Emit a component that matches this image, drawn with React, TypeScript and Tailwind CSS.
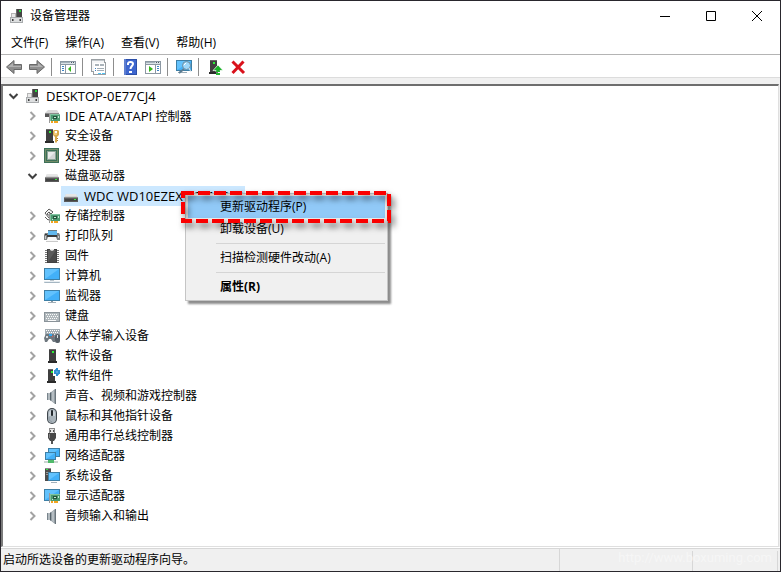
import React, { useState } from 'react';

type IconProps = { children: React.ReactNode };

const Icon = ({ children }: IconProps) => (
  <svg width="16" height="16" viewBox="0 0 16 16" className="block shrink-0" aria-hidden="true">
    {children}
  </svg>
);

// Parts shared by several icons
const Screen = ({ x = 0, y = 2, w = 16, h = 11 }: { x?: number; y?: number; w?: number; h?: number }) => (
  <>
    <rect x={x} y={y} width={w} height={h} fill="#3d7fa6" />
    <rect x={x + 1} y={y + 1} width={w - 2} height={h - 2} fill="#42b0f8" />
    <path d={`M${x + 1} ${y + h - 1}V${y + 1}H${x + w - 1}Z`} fill="#62c2fd" />
  </>
);

const Card = () => (
  <>
    <path d="M5 5h1v10H5z" fill="#9a9a9a" />
    <rect x="6" y="6" width="10" height="7" fill="#4c9a72" />
    <path d="M6 6h10v1H6zM6 7h1v6H6z" fill="#80c39f" />
    <rect x="9" y="8" width="4" height="3" fill="#24553c" />
    <path d="M10 9h2v1h-2zM14 8h1v2h-1zM8 11h1v1H8z" fill="#c3ead3" />
    <path d="M7 13h2v2H7zM10 13h4v2h-4z" fill="#f2a51f" />
  </>
);

const Tower = ({ x = 5 }: { x?: number }) => (
  <>
    <path d={`M${x} 1h7v13h-7z`} fill="#3f3f3f" />
    <path d={`M${x} 1h7v1h-7z`} fill="#686868" />
    <rect x={x + 3} y="3" width="2" height="2" fill="#2bef37" />
    <rect x={x - 1} y="13" width="9" height="2" fill="#2a2a2a" />
  </>
);

const ComputerIcon = () => (
  <Icon>
    <rect x="7" y="1" width="6" height="9" fill="#454545" />
    <rect x="7" y="1" width="1" height="9" fill="#6b6b6b" />
    <rect x="10" y="2" width="2" height="2" fill="#25d83a" />
    <path d="M3 6h3v3H3z" fill="#e9e9e9" />
    <path d="M2 5h5v4H6V6H3v3H2z" fill="#b5b5b5" />
    <path d="M1 9h13v6H1z" fill="#a8abad" />
    <path d="M2 10h11v4H2z" fill="#dcdedf" />
    <path d="M3 11h1v2H3zM11 11h1v2h-1z" fill="#3d3d3d" />
    <path d="M4 11h1v2H4zM10 11h1v2h-1z" fill="#8b8b8b" />
  </Icon>
);

const DriveIcon = () => (
  <Icon>
    <path d="M3 6h10l2 4H1z" fill="#d2d2d2" />
    <path d="M3 6h10l1 2H2z" fill="#e6e6e6" />
    <path d="M1 9h14v5H1z" fill="#5b5b5b" />
    <path d="M1 9h14v1H1z" fill="#8d8d8d" />
    <path d="M2 11h12v2H2z" fill="#434343" />
    <rect x="11" y="11" width="2" height="1" fill="#37ed3c" />
  </Icon>
);

const IdeIcon = () => (
  <Icon>
    <path d="M4 2h9l2 3H1z" fill="#d8d8d8" />
    <rect x="1" y="5" width="14" height="4" fill="#565656" />
    <path d="M1 5h14v1H1z" fill="#8d8d8d" />
    <Card />
  </Icon>
);

const SecurityIcon = () => (
  <Icon>
    <Tower x={2} />
    <path d="M10 2h4l1 1v4l-2 2v5l-1 1-1-1V9L9 7V3z" fill="#d9aa4b" />
    <path d="M10 3h3v4h-3z" fill="#f1cc7b" />
    <path d="M11 3h2v2h-2z" fill="#fff" />
    <path d="M13 10h1v1h-1zM13 12h1v1h-1z" fill="#b37b18" />
  </Icon>
);

const CpuIcon = () => (
  <Icon>
    <rect x="0" y="0" width="15" height="15" fill="#3c7058" />
    <path d="M1.500 1.500h12v12h-12z" fill="none" stroke="#a8a876" strokeDasharray="1 1" />
    <rect x="3" y="3" width="9" height="9" fill="#8ea698" />
    <rect x="4" y="4" width="7" height="7" fill="#d3d6d6" />
    <path d="M4 11V4h7z" fill="#e9ebeb" />
  </Icon>
);

const StorageIcon = () => (
  <Icon>
    <path d="M1 5 5 1l4 3-2 2-2-2-2 2 3 2-1 2z" fill="#f4f4f4" stroke="#5b5b5b" />
    <path d="M1 9l3 3 2-1" fill="none" stroke="#5b5b5b" />
    <Card />
  </Icon>
);

const PrinterIcon = () => (
  <Icon>
    <rect x="4" y="3" width="9" height="4" fill="#62b9ef" />
    <path d="M4 2h9v1H4z" fill="#657984" />
    <path d="M1 5h3v2h9V5h2l1 2v5H0V7z" fill="#7d8183" />
    <path d="M1 6h2v1H1zM3 7h10v2H3z" fill="#3a3c3d" />
    <path d="M1 8h1v3H1zM14 8h1v2h-1z" fill="#c8cbcd" />
    <path d="M4 9h8l2 5H2z" fill="#f8f8f8" />
    <path d="M2 13h12v1H2z" fill="#c9c9c9" />
  </Icon>
);

const FirmwareIcon = () => (
  <Icon>
    <path
      d="M1 2h14v1H1zM1 4h14v1H1zM1 6h14v1H1zM1 8h14v1H1zM1 10h14v1H1zM1 12h14v1H1zM1 14h14v1H1z"
      fill="#777"
    />
    <rect x="3" y="1" width="10" height="14" fill="#414141" />
    <path d="M4 2h8v12H4z" fill="#5b5b5b" />
    <path d="M12 2v12H4z" fill="#4a4a4a" />
    <path d="M6 1h4v1L8 3 6 2z" fill="#e8e8e8" />
  </Icon>
);

const PcIcon = () => (
  <Icon>
    <Screen y={0} h={12} />
    <path d="M6 12h4v1H6z" fill="#bdc7ce" />
    <path d="M1 13h14l1 2H0z" fill="#a5b6c2" />
    <path d="M1 13h14v1H1z" fill="#e7edf1" />
  </Icon>
);

const MonitorIcon = () => (
  <Icon>
    <Screen />
    <path d="M7 13h2v1H7z" fill="#8898a3" />
    <path d="M4 14h8v1H4z" fill="#a3b0b8" />
  </Icon>
);

const KeyboardIcon = () => (
  <Icon>
    <rect x="0" y="4" width="16" height="10" fill="#8a9399" />
    <rect x="1" y="5" width="14" height="8" fill="#b0b8bc" />
    <path d="M2 6.500h12M3 8.500h11" stroke="#fafafa" strokeDasharray="1 1" />
    <path d="M2 10.500h12" stroke="#fafafa" strokeDasharray="1 1" />
    <path d="M4 12h8v1H4z" fill="#fafafa" />
  </Icon>
);

const HidIcon = () => (
  <Icon>
    <rect x="1" y="1" width="15" height="7" fill="#a4adb3" />
    <path d="M2 2.500h13M3 4.500h12M2 6.500h13" stroke="#fff" strokeDasharray="1 1" />
    <path d="M2 6h8l1 3 0 5h-2l-2-3H5l-2 3H1L0 10z" fill="#6f787f" />
    <path d="M2 8h2v2H2z" fill="#d8dcdf" />
    <rect x="5" y="6" width="3" height="2" fill="#35a7f2" />
    <rect x="8" y="8" width="1" height="1" fill="#e25757" />
    <rect x="11" y="6" width="5" height="9" rx="2" fill="#555e66" />
    <path d="M13 7h1v3h-1z" fill="#dbe1e5" />
  </Icon>
);

const SoftwareIcon = () => (
  <Icon>
    <Tower x={5} />
  </Icon>
);

const ComponentIcon = () => (
  <Icon>
    <Tower x={4} />
    <path d="M9 0h7v8H9z" fill="#fff" />
    <path d="M12 0h2v2h2v4h-2v2h-2V6h-2V2h2z" fill="#2f8fd3" />
    <path d="M11 1h1v1h-1zM14 6h1v1h-1zM12 3h2v2h-2z" fill="#58a9e0" />
  </Icon>
);

const SpeakerIcon = () => (
  <Icon>
    <path d="M3 5h4v7H3z" fill="#b3bbc0" />
    <path d="M3 5h1v7H3z" fill="#78848c" />
    <path d="M6 5l5-4v15l-5-4z" fill="#929ca2" />
    <path d="M6 5l1-1v9l-1-1z" fill="#56626a" />
    <path d="M8 4l2-2v13l-2-2z" fill="#b5bdc2" />
    <path d="M11 1h1v15h-1z" fill="#6b757c" />
  </Icon>
);

const MouseIcon = () => (
  <Icon>
    <rect x="3" y="0" width="10" height="16" rx="5" fill="#3e464c" />
    <rect x="4" y="1" width="8" height="14" rx="4" fill="#a9b3ba" />
    <path d="M5 8V4l2-2v6zM9 2l2 2v4H9z" fill="#c9d1d7" />
    <rect x="7" y="2" width="2" height="6" rx="1" fill="#22282c" />
    <path d="M5 9v3l3 2" fill="none" stroke="#8f9aa2" />
  </Icon>
);

const UsbIcon = () => (
  <Icon>
    <path d="M5 0h6v5H5z" fill="#8b8b8b" />
    <path d="M6 1h4v4H6z" fill="#e6e6e6" />
    <path d="M6 2h1v2H6zM9 2h1v2H9z" fill="#555" />
    <path d="M4 5h8v5l-2 3H6l-2-3z" fill="#484848" />
    <path d="M5 6h1v4H5z" fill="#828282" />
    <path d="M7 13h2v3H7z" fill="#555" />
  </Icon>
);

const NetworkIcon = () => (
  <Icon>
    <Screen x={4} y={0} w={12} h={9} />
    <Screen x={1} y={4} w={11} h={8} />
    <path d="M6 12h2v1H6z" fill="#47a76c" />
    <path d="M0 13h14v2H0z" fill="#cbd4d0" />
    <path d="M4 12h6v3H4z" fill="#4fb96a" />
  </Icon>
);

const SystemIcon = () => (
  <Icon>
    <rect x="1" y="0" width="6" height="13" fill="#4d4d4d" />
    <path d="M1 0h6v1H1z" fill="#8b8b8b" />
    <rect x="2" y="1" width="2" height="1" fill="#2de841" />
    <path d="M2 4h4v1H2zM2 6h4v1H2z" fill="#999" />
    <Screen x={4} y={4} w={12} h={9} />
    <path d="M7 14h6v1H7z" fill="#a2b1bb" />
  </Icon>
);

const DisplayIcon = () => (
  <Icon>
    <Screen y={1} h={12} />
    <Card />
  </Icon>
);

const devices = [
  { latin: 'IDE ATA/ATAPI ', name: '控制器', icon: IdeIcon },
  { name: '安全设备', icon: SecurityIcon },
  { name: '处理器', icon: CpuIcon },
  { name: '磁盘驱动器', icon: DriveIcon, child: 'WDC WD10EZEX-22MFCA0' },
  { name: '存储控制器', icon: StorageIcon },
  { name: '打印队列', icon: PrinterIcon },
  { name: '固件', icon: FirmwareIcon },
  { name: '计算机', icon: PcIcon },
  { name: '监视器', icon: MonitorIcon },
  { name: '键盘', icon: KeyboardIcon },
  { name: '人体学输入设备', icon: HidIcon },
  { name: '软件设备', icon: SoftwareIcon },
  { name: '软件组件', icon: ComponentIcon },
  { name: '声音、视频和游戏控制器', icon: SpeakerIcon },
  { name: '鼠标和其他指针设备', icon: MouseIcon },
  { name: '通用串行总线控制器', icon: UsbIcon },
  { name: '网络适配器', icon: NetworkIcon },
  { name: '系统设备', icon: SystemIcon },
  { name: '显示适配器', icon: DisplayIcon },
  { name: '音频输入和输出', icon: SpeakerIcon },
];

const Toggle = ({ open, label, onClick }: { open: boolean; label: string; onClick: () => void }) => (
  <button type="button" aria-label={label} aria-expanded={open} onClick={onClick} className="mr-[3px] shrink-0">
    <Icon>
      {open ? (
        <path d="M3.500 6l4 4 4-4" fill="none" stroke="#404040" strokeWidth="2" />
      ) : (
        <path d="M5.500 4l4 4-4 4" fill="none" stroke="#a3a3a3" strokeWidth="2" />
      )}
    </Icon>
  </button>
);

const ToolButton = ({ label, children }: { label: string; children: React.ReactNode }) => (
  <button type="button" aria-label={label} className="flex h-5 w-[23px] items-center justify-center">
    <Icon>{children}</Icon>
  </button>
);

const ToolDivider = () => <div className="ml-[3px] mr-1 h-[18px] w-px bg-[#8d8d8d]" />;

const PanelFrame = () => (
  <>
    <rect x="0" y="2" width="16" height="13" fill="#8c98a3" />
    <rect x="1" y="3" width="14" height="2" fill="#dbe2e7" />
    <path d="M1 3h9v1H1z" fill="#a4b1bb" />
    <path d="M11 3h1v1h-1zM13 3h1v1h-1z" fill="#4b5963" />
    <rect x="1" y="6" width="14" height="8" fill="#fff" />
  </>
);

const Toolbar = () => (
  <div className="flex h-[23px] items-center border-b border-[#dcdcdc] pl-px pt-[2px]">
    <ToolButton label="后退">
      <path d="M.5 8 8 1.500V5.500h7.500v5H8V14.500z" fill="#8f8f8f" stroke="#6a6a6a" />
      <path d="M2 8 7 4v3h8v1z" fill="#b2b2b2" />
    </ToolButton>
    <ToolButton label="前进">
      <path d="M15.500 8 8 1.500V5.500H.5v5H8V14.500z" fill="#8f8f8f" stroke="#6a6a6a" />
      <path d="M14 8 9 4v3H1v1z" fill="#b2b2b2" />
    </ToolButton>
    <ToolDivider />
    <ToolButton label="显示/隐藏控制台树">
      <PanelFrame />
      <path d="M5 6h1v8H5z" fill="#8c98a3" />
      <path d="M2 7h2v1H2zM2 9h2v1H2zM2 11h2v1H2z" fill="#3d82c5" />
      <path d="M11 7v6L8 10z" fill="#35b51c" />
    </ToolButton>
    <ToolDivider />
    <ToolButton label="属性">
      <path d="M0 0h14v3h1v13H2v-3H0z" fill="#9a9fa3" />
      <path d="M1 1h12v11H1z" fill="#f5f6f7" />
      <path d="M1 1h12v1H1z" fill="#c2c8cc" />
      <path d="M3 4h11v11H3z" fill="#fff" />
      <path d="M4 5h4v2H4zM9 5h4v2H9z" fill="#aab3ba" />
      <path d="M4 9h1v1H4zM4 11h1v1H4z" fill="#3d82c5" />
      <path d="M6 9h7v1H6zM6 11h7v1H6z" fill="#a1adb5" />
      <path d="M7 14h3v1H7zM11 14h3v1h-3z" fill="#4fc3f7" />
    </ToolButton>
    <ToolDivider />
    <ToolButton label="帮助">
      <rect x="2" y="0" width="13" height="16" fill="#2c4fa8" />
      <rect x="4" y="1" width="10" height="14" fill="#3d66cf" />
      <path d="M2 0h2v16H2z" fill="#5f7fcf" />
      <path d="M6 6V4.500C6 2.300 11 2.300 11 5c0 2-2.500 2.200-2.500 5" fill="none" stroke="#fff" strokeWidth="2" />
      <rect x="7" y="12" width="3" height="2" fill="#fff" />
    </ToolButton>
    <ToolButton label="显示/隐藏操作窗格">
      <PanelFrame />
      <path d="M10 6h1v8h-1z" fill="#8c98a3" />
      <path d="M12 7h2v1h-2zM12 9h2v1h-2zM12 11h2v1h-2z" fill="#3d82c5" />
      <path d="M4 7v6l4-3z" fill="#35b51c" />
    </ToolButton>
    <ToolDivider />
    <ToolButton label="扫描检测硬件改动">
      <Screen y={1} h={11} />
      <path d="M2 13h9v1H2z" fill="#9aabb6" />
      <path d="M8 10l-5 4" stroke="#5d7d92" strokeWidth="2" />
      <circle cx="10.500" cy="6.500" r="4" fill="#9ed8fb" stroke="#6d8a9b" />
      <path d="M8 6l2-2" stroke="#fff" />
      <path d="M13 9l2 4" stroke="#dfe8ee" />
    </ToolButton>
    <ToolDivider />
    <ToolButton label="更新驱动程序">
      <Tower x={3} />
      <path d="M11 6 16 11.500h-3V13H9v-1.500H6z" fill="#18b027" stroke="#fff" strokeWidth=".7" />
      <path d="M9 12h4v1H9zM9 14h4v2H9z" fill="#22b630" />
    </ToolButton>
    <ToolButton label="卸载设备">
      <path d="M2.500 2.500 14 14M13.500 2.500 2.500 14" fill="none" stroke="#d9111b" strokeWidth="3" />
    </ToolButton>
  </div>
);

const ContextMenu = () => (
  <div
    role="menu"
    className="absolute left-[184px] top-[192px] w-[203px] border border-[#c5c5c5] bg-[#f0f0f0] p-[2px] leading-[22px] shadow-[3px_3px_2px_rgba(0,0,0,0.45)]"
  >
    <button type="button" role="menuitem" className="block h-[22px] w-full bg-[#91c9f7] pl-8 text-left">
      更新驱动程序(P)
    </button>
    <button type="button" role="menuitem" className="block h-[22px] w-full pl-8 text-left">
      卸载设备(U)
    </button>
    <hr className="my-[3px] ml-7 border-[#d5d5d5]" />
    <button type="button" role="menuitem" className="block h-[22px] w-full pl-8 text-left">
      扫描检测硬件改动(A)
    </button>
    <hr className="my-[3px] ml-7 border-[#d5d5d5]" />
    <button type="button" role="menuitem" className="block h-[22px] w-full pl-8 text-left font-bold">
      属性(R)
    </button>
    {/* Dashed marker round the update entry */}
    <svg
      width="220"
      height="44"
      viewBox="0 0 220 44"
      className="pointer-events-none absolute -left-[5px] -top-[3px] drop-shadow-[3px_4px_3px_rgba(0,0,0,0.6)]"
      aria-hidden="true"
    >
      <rect x="2" y="2" width="206" height="28" fill="none" stroke="#fa0000" strokeWidth="4" strokeDasharray="12 4" strokeDashoffset="1" />
    </svg>
  </div>
);

const App: React.FC = () => {
  const [rootOpen, setRootOpen] = useState(true);
  const [expanded, setExpanded] = useState<string[]>(['磁盘驱动器']);

  const toggle = (name: string) => {
    setExpanded(prev => (prev.includes(name) ? prev.filter(n => n !== name) : [...prev, name]));
  };

  return (
    <div className="relative flex min-h-screen flex-col border border-[#29272d] bg-white font-['Open_Sans','Noto_Sans_CJK_SC',sans-serif] text-xs text-black">
      <header className="flex h-[29px] items-center pl-2">
        <ComputerIcon />
        <h1 className="ml-[5px] flex-1">设备管理器</h1>
        <button type="button" aria-label="最小化" className="flex h-full w-[46px] items-center justify-center">
          <svg width="10" height="10" viewBox="0 0 10 10">
            <path d="M0 5.500h10" stroke="#000" />
          </svg>
        </button>
        <button type="button" aria-label="最大化" className="flex h-full w-[46px] items-center justify-center">
          <svg width="10" height="10" viewBox="0 0 10 10">
            <path d="M.5 .5h9v9h-9z" fill="none" stroke="#000" />
          </svg>
        </button>
        <button type="button" aria-label="关闭" className="flex h-full w-[46px] items-center justify-center">
          <svg width="10" height="10" viewBox="0 0 10 10">
            <path d="M0 0l10 10M10 0L0 10" stroke="#000" />
          </svg>
        </button>
      </header>

      <nav className="flex h-[25px] items-center gap-[17px] border-b border-[#b4b4b4] pl-[10px] pt-[2px]">
        <button type="button">文件(F)</button>
        <button type="button">操作(A)</button>
        <button type="button">查看(V)</button>
        <button type="button">帮助(H)</button>
      </nav>

      <Toolbar />

      <main className="flex flex-1 flex-col bg-[#f0f0f0] pr-px pt-[6px]">
        <ul className="flex-1 border-b border-l-2 border-r border-t-2 border-b-[#dfdfdf] border-l-[#7b7b7b] border-r-[#dfdfdf] border-t-[#6e6e6e] bg-white pl-[3px] leading-5">
          <li>
            <div className="flex h-5 items-center">
              <Toggle open={rootOpen} label="DESKTOP-0E77CJ4" onClick={() => setRootOpen(!rootOpen)} />
              <ComputerIcon />
              <span className="ml-[5px] text-[13px]">DESKTOP-0E77CJ4</span>
            </div>
            {rootOpen && (
              <ul className="pl-[19px]">
                {devices.map(({ latin, name, icon: DeviceIcon, child }) => {
                  const open = expanded.includes(name);
                  return (
                    <li key={name}>
                      <div className="flex h-5 items-center">
                        <Toggle open={open} label={name} onClick={() => toggle(name)} />
                        <DeviceIcon />
                        <span className="ml-[5px]">
                          {latin && <span className="text-[13px]">{latin}</span>}
                          {name}
                        </span>
                      </div>
                      {open && child && (
                        <div className="ml-9 flex h-5 w-[184px] items-center bg-[#cce8ff] pl-[2px]">
                          <DriveIcon />
                          <span className="ml-[5px] text-[13px]">{child}</span>
                        </div>
                      )}
                    </li>
                  );
                })}
              </ul>
            )}
          </li>
        </ul>
      </main>

      <footer className="relative flex h-6 items-end border-t border-white bg-[#f0f0f0] shadow-[inset_0_1px_0_#d7d7d7]">
        <p className="h-[22px] flex-1 border-r border-[#d7d7d7] pl-[2px] leading-[22px]">启动所选设备的更新驱动程序向导。</p>
        <div className="h-[20px] w-[133px] border-r border-[#d7d7d7]" />
        <div className="mr-[2px] h-[20px] w-[85px] border-r border-[#d7d7d7]" />
        <span className="absolute bottom-[3px] right-2 font-['Roboto',sans-serif] text-[13px] leading-5 text-[#f6f6f6]">
          http://www.boxuming.com
        </span>
      </footer>

      <ContextMenu />
    </div>
  );
};

export default App;
